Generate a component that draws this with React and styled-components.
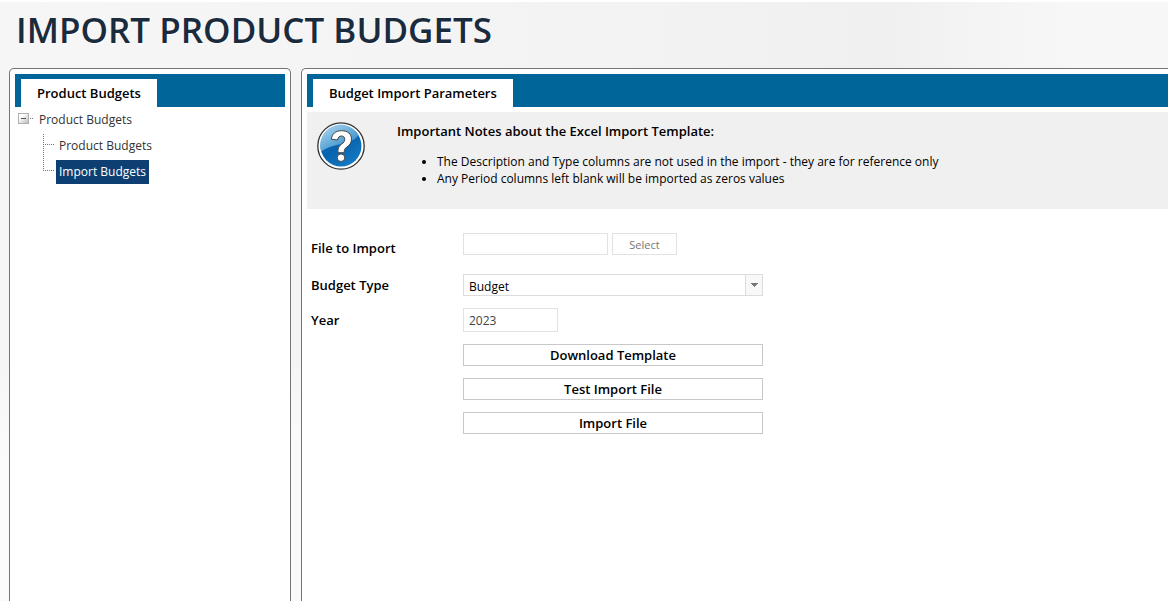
import React from "react";
import styled, { createGlobalStyle } from "styled-components";

const GlobalStyle = createGlobalStyle`
  *, *::before, *::after { box-sizing: border-box; }
  body {
    margin: 0;
    background: #fff;
    color: #000;
    font-family: "Segoe UI", "Open Sans", "Noto Sans", sans-serif;
    font-size: 12px;
    line-height: 17px;
  }
  button, input, select { font: inherit; color: inherit; }
`;

const Page = styled.div`
  display: flex;
  flex-direction: column;
  min-height: 100vh;
  border-top: 2px solid #fff;
  background:
    linear-gradient(180deg, transparent 60%, rgba(255, 255, 255, 0.5) 75%),
    linear-gradient(90deg, #f6f6f6 0%, #f4f4f4 40%, #f2f2f2 62%, #f0f0f0 76%, #f4f4f4 84%, #f7f7f7 92%, #f7f7f7 100%);
`;

const PageTitle = styled.h1`
  margin: 0;
  padding: 6px 16px 16px;
  color: #1b2b3e;
  font-family: "Open Sans", sans-serif;
  font-size: 35px;
  font-weight: 600;
  line-height: 44px;
  text-shadow: 1px 1px 1px #fff;
`;

const Columns = styled.div`
  display: flex;
  flex: 1;
  gap: 10px;
  padding-left: 9px;
`;

const Panel = styled.section`
  border: 1px solid #747474;
  border-bottom: 0;
  border-radius: 5px 5px 0 0;
  padding: 5px;
  background: #fff;
`;

const Sidebar = styled(Panel)`
  flex: 0 0 282px;
`;

const Main = styled(Panel)`
  flex: 1;
  min-width: 0;
  border-right: 0;
  border-radius: 5px 0 0 0;
  padding-right: 0;
`;

const TabBar = styled.div`
  display: flex;
  padding: 5px 6px 0;
  background: #006699;
`;

const Tab = styled.h2`
  margin: 0;
  padding: 0 16px;
  background: #fff;
  font-size: 13px;
  font-weight: 600;
  line-height: 28px;
`;

const Tree = styled.ul`
  margin: 0;
  padding: 1px 0 0 3px;
  list-style: none;
`;

const Branch = styled.ul`
  margin: 2px 0 0;
  padding: 0 0 0 25px;
  list-style: none;
`;

const Row = styled.div`
  display: flex;
`;

const TreeLines = styled.svg`
  flex: none;
  margin-right: 2px;
`;

const Leaf = styled.li`
  display: flex;
  height: 26px;
`;

const Toggle = styled.button`
  width: 18px;
  height: 24px;
  padding: 0;
  border: 0;
  background: none;
  svg { display: block; }
`;

const TreeLink = styled.a`
  height: 24px;
  padding: 0 3px;
  background: ${(p) => (p.$selected ? "#0d3f73" : "transparent")};
  color: ${(p) => (p.$selected ? "#fff" : "#333")};
  line-height: 24px;
  text-decoration: none;
`;

const Notes = styled.div`
  display: flex;
  gap: 32px;
  min-height: 97px;
  margin-top: 5px;
  padding: 10px;
  background: #f0f0f0;
`;

const NotesTitle = styled.h3`
  margin: 0 0 12px;
  font-size: 13px;
  font-weight: 600;
  line-height: 19px;
`;

const NotesList = styled.ul`
  margin: 0;
  padding-left: 40px;
`;

const Form = styled.form`
  display: grid;
  grid-template-columns: 140px 300px;
  column-gap: 12px;
  row-gap: 12px;
  padding: 24px 4px;
`;

const Label = styled.label`
  align-self: center;
  padding-top: 1px;
  font-size: 13px;
  font-weight: 600;
`;

const FileRow = styled.div`
  display: flex;
  gap: 4px;
  height: 29px;
`;

const TextBox = styled.input`
  width: ${(p) => p.$width};
  height: ${(p) => p.$height};
  padding: 1px 5px 0;
  border: 1px solid #e2e2e6;
  border-radius: 0;
  background: #fff;
  color: #444;
`;

const SelectFile = styled.button`
  width: 65px;
  height: 22px;
  padding: 0;
  border: 1px solid #e2e2e2;
  background: #fff;
  color: #767676;
  font-size: 11px;
`;

const SelectBox = styled.div`
  position: relative;
  height: 22px;
`;

const Select = styled.select`
  display: block;
  width: 100%;
  height: 22px;
  padding: 2px 22px 0 5px;
  border: 1px solid #dcdcdc;
  border-radius: 0;
  background: #fff;
  appearance: none;
`;

const Arrow = styled.svg`
  position: absolute;
  top: 0;
  right: 0;
  pointer-events: none;
`;

const Actions = styled.div`
  grid-column: 2;
  display: grid;
  gap: 12px;
`;

const Action = styled.button`
  height: 22px;
  padding: 0;
  border: 1px solid #c8c8c8;
  background: #fff;
  font-size: 13px;
  font-weight: 600;
  line-height: 20px;
`;

function Collapse() {
  return (
    <svg width="18" height="24" viewBox="0 0 18 24" shapeRendering="crispEdges">
      <defs>
        <linearGradient id="toggleFill" x1="0" y1="0" x2="1" y2="1">
          <stop offset="0.3" stopColor="#fff" />
          <stop offset="1" stopColor="#b8b8b8" />
        </linearGradient>
      </defs>
      <rect x="0.5" y="5.5" width="10" height="10" fill="url(#toggleFill)" stroke="#b0b0b0" />
      <path d="M3 10.5h5" stroke="#555" />
      <path d="M12 10.5h3" stroke="#777" strokeDasharray="1 1" />
    </svg>
  );
}

function Connector({ last }) {
  return (
    <TreeLines width="11" height="26" viewBox="0 0 11 26" shapeRendering="crispEdges">
      <path d={last ? "M0.5 0v11" : "M0.5 0v26"} stroke="#777" strokeDasharray="1 1" />
      <path d="M0 10.5h11" stroke="#777" strokeDasharray="1 1" />
    </TreeLines>
  );
}

function HelpIcon() {
  return (
    <svg width="48" height="48" viewBox="0 0 48 48" aria-hidden="true">
      <defs>
        <linearGradient id="helpFill" x1="0" y1="0" x2="0.7" y2="1">
          <stop offset="0" stopColor="#1672b4" />
          <stop offset="0.55" stopColor="#0763ad" />
          <stop offset="1" stopColor="#1479c4" />
        </linearGradient>
        <linearGradient id="helpShine" x1="0" y1="0" x2="0.8" y2="1">
          <stop offset="0" stopColor="#b4dcf2" />
          <stop offset="1" stopColor="#2583c4" />
        </linearGradient>
      </defs>
      <circle cx="24" cy="24" r="23.2" fill="#fff" stroke="#333" strokeWidth="1.3" />
      <circle cx="24" cy="24" r="20.5" fill="url(#helpFill)" />
      <path d="M4.2 29.5A20.5 20.5 0 0 1 41.5 13C37 22 16 21 4.2 29.5Z" fill="url(#helpShine)" />
      <path
        d="M14.4 17.2C14.8 11.8 18.7 8.7 24.6 8.7C30.7 8.7 34.5 12 34.5 17C34.5 21 32.5 23.2 29.8 25.1C27.7 26.6 27.2 27.5 27.2 30.7H20.9C20.7 26.2 21.9 24 24.6 22.1C26.7 20.6 27.7 19.4 27.7 17.3C27.7 15.2 26.5 14 24.4 14C22.2 14 21 15.3 20.6 18Z"
        fill="#fff"
        stroke="#444"
        strokeWidth="1"
      />
      <circle cx="24" cy="35.7" r="3.8" fill="#fff" stroke="#444" strokeWidth="1" />
    </svg>
  );
}

export default function App() {
  return (
    <>
      <GlobalStyle />
      <Page>
        <PageTitle>IMPORT PRODUCT BUDGETS</PageTitle>
        <Columns>
          <Sidebar as="nav">
            <TabBar>
              <Tab>Product Budgets</Tab>
            </TabBar>
            <Tree>
              <li>
                <Row>
                  <Toggle type="button" aria-label="Collapse">
                    <Collapse />
                  </Toggle>
                  <TreeLink href="#root">Product Budgets</TreeLink>
                </Row>
                <Branch>
                  <Leaf>
                    <Connector />
                    <TreeLink href="#budgets">Product Budgets</TreeLink>
                  </Leaf>
                  <Leaf>
                    <Connector last />
                    <TreeLink href="#import" $selected>Import Budgets</TreeLink>
                  </Leaf>
                </Branch>
              </li>
            </Tree>
          </Sidebar>
          <Main as="main">
            <TabBar>
              <Tab>Budget Import Parameters</Tab>
            </TabBar>
            <Notes>
              <HelpIcon />
              <div>
                <NotesTitle>Important Notes about the Excel Import Template:</NotesTitle>
                <NotesList>
                  <li>The Description and Type columns are not used in the import - they are for reference only</li>
                  <li>Any Period columns left blank will be imported as zeros values</li>
                </NotesList>
              </div>
            </Notes>
            <Form onSubmit={(e) => e.preventDefault()}>
              <Label htmlFor="file">File to Import</Label>
              <FileRow>
                <TextBox id="file" type="text" $width="145px" $height="22px" />
                <SelectFile type="button">Select</SelectFile>
              </FileRow>
              <Label htmlFor="type">Budget Type</Label>
              <SelectBox>
                <Select id="type" defaultValue="Budget">
                  <option>Budget</option>
                </Select>
                <Arrow width="18" height="22" viewBox="0 0 18 22" shapeRendering="crispEdges">
                  <rect x="0.5" y="0.5" width="17" height="21" fill="#f8f8f8" stroke="#dcdcdc" />
                  <path d="M5 9h8L9 13Z" fill="#777" />
                </Arrow>
              </SelectBox>
              <Label htmlFor="year">Year</Label>
              <TextBox id="year" type="text" defaultValue="2023" $width="95px" $height="24px" />
              <Actions>
                <Action type="button">Download Template</Action>
                <Action type="button">Test Import File</Action>
                <Action type="submit">Import File</Action>
              </Actions>
            </Form>
          </Main>
        </Columns>
      </Page>
    </>
  );
}
